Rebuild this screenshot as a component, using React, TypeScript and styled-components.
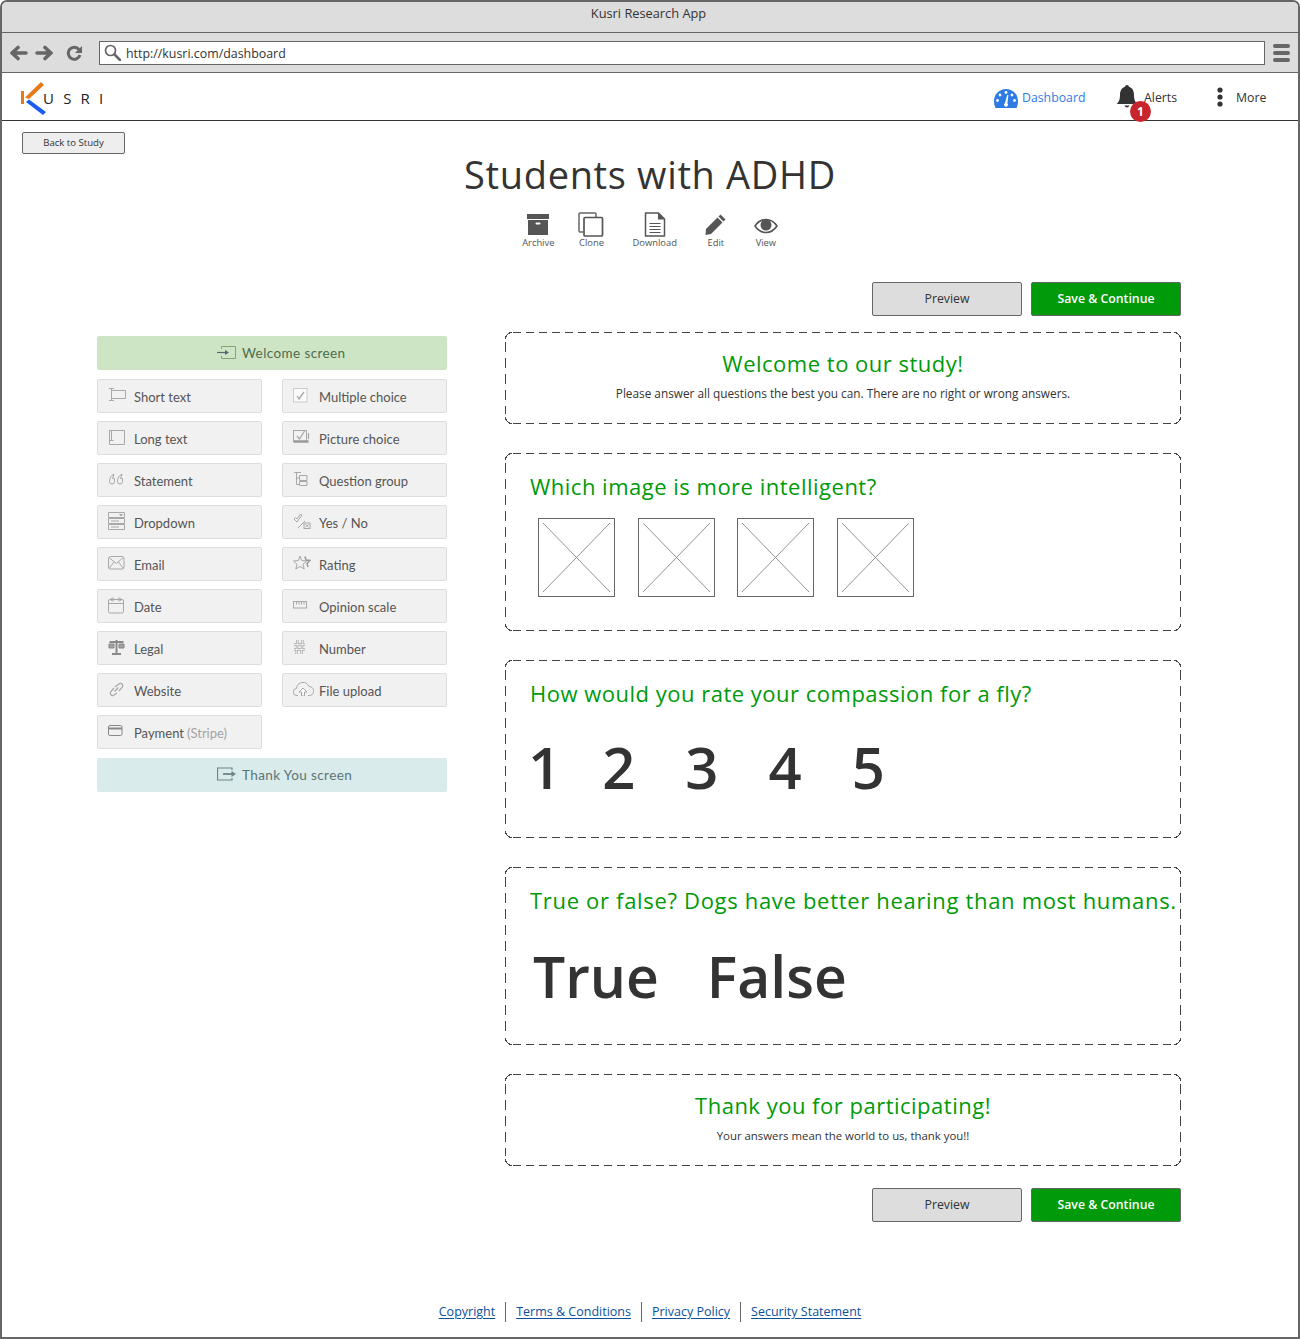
import * as React from "react";
import styled, { createGlobalStyle } from "styled-components";

const Global = createGlobalStyle`
  html, body { margin: 0; padding: 0; background: #fff; }
  * { box-sizing: border-box; }
  body { font-family: "Open Sans", "Liberation Sans", sans-serif; color: #333; }
`;

const Window = styled.div`
  width: 1300px;
  height: 1339px;
  border: 2px solid #666;
  border-radius: 7px 7px 0 0;
  display: flex;
  flex-direction: column;
  overflow: hidden;
`;

const TitleBar = styled.div`
  height: 31px;
  flex: none;
  background: #ddd;
  border-bottom: 1px solid #666;
  text-align: center;
  font-size: 12.8px;
  line-height: 23px;
  padding-right: 3px;
`;

const Toolbar = styled.div`
  height: 40px;
  flex: none;
  background: #ddd;
  border-bottom: 1px solid #666;
  display: flex;
  align-items: center;
  padding: 0 8px 0 8px;
`;

const NavIcons = styled.div`
  display: flex;
  align-items: center;
  gap: 7px;
  width: 89px;
  flex: none;
`;

const AddressBar = styled.div`
  width: 1166px;
  height: 24px;
  flex: none;
  border: 1px solid #666;
  background: #fff;
  display: flex;
  align-items: center;
  gap: 5px;
  padding-left: 4px;
  font-size: 12.4px;
`;

const UrlText = styled.span`
  padding-top: 2px;
`;

const Menu = styled.div`
  margin-left: 8px;
  width: 18px;
  display: flex;
  flex-direction: column;
  gap: 3px;
`;

const MenuBar = styled.span`
  display: block;
  height: 4px;
  border-radius: 2px;
  background: #666;
`;

const Header = styled.header`
  height: 48px;
  flex: none;
  border-bottom: 1px solid #333;
  display: flex;
  align-items: center;
  padding: 0 33px 0 18px;
`;

const Logo = styled.div`
  display: flex;
  align-items: center;
  flex: 1;
  padding-top: 3px;
`;

const LogoText = styled.span`
  font-size: 15px;
  font-weight: 500;
  letter-spacing: 9.2px;
  margin-left: -4px;
  color: #222;
`;

const Nav = styled.nav`
  display: flex;
  align-items: center;
`;

const NavItem = styled.a<{ $active?: boolean; $width: number }>`
  display: flex;
  align-items: center;
  position: relative;
  flex: none;
  width: ${(p) => p.$width}px;
  font-size: 12.3px;
  font-weight: 500;
  color: ${(p) => (p.$active ? "#2f7be5" : "#333")};
  svg { flex: none; }
`;

const NavLabel = styled.span<{ $left: number }>`
  margin-left: ${(p) => p.$left}px;
  padding-top: 1px;
`;

const Badge = styled.span`
  position: absolute;
  left: 14px;
  top: 16px;
  width: 21px;
  height: 21px;
  border-radius: 50%;
  background: #c8242b;
  color: #fff;
  font-size: 12px;
  font-weight: 700;
  line-height: 21px;
  text-align: center;
`;

const Body = styled.main`
  flex: 1;
  display: flex;
  flex-direction: column;
`;

const BackButton = styled.button`
  width: 103px;
  height: 22px;
  margin: 11px 0 0 20px;
  padding: 0 0 2px;
  flex: none;
  background: #eee;
  border: 1px solid #666;
  border-radius: 2px;
  color: #333;
  font: 500 9.6px "Open Sans", sans-serif;
`;

const PageTitle = styled.h1`
  margin: -1px 0 1px;
  height: 42px;
  text-align: center;
  font-size: 38px;
  line-height: 42px;
  font-weight: 500;
  letter-spacing: 0.65px;
  color: #333;
`;

const Tools = styled.div`
  display: flex;
  justify-content: center;
  margin-top: 16px;
  height: 38px;
`;

const Tool = styled.div<{ $gap?: number }>`
  display: flex;
  flex-direction: column;
  align-items: center;
  margin-left: ${(p) => p.$gap ?? 0}px;
  font-size: 9.4px;
  line-height: 11px;
  color: #555;
`;

const ToolIcon = styled.div`
  height: 25px;
  flex: none;
  display: flex;
  align-items: flex-end;
`;

const Actions = styled.div<{ $top: number }>`
  display: flex;
  justify-content: flex-end;
  gap: 9px;
  margin-top: ${(p) => p.$top}px;
  padding-right: 117px;
`;

const ActionButton = styled.button<{ $primary?: boolean }>`
  width: 150px;
  height: 34px;
  padding: 0 0 2px;
  border: 1px solid #666;
  border-radius: 2px;
  background: ${(p) => (p.$primary ? "#009a0a" : "#ddd")};
  color: ${(p) => (p.$primary ? "#fff" : "#333")};
  font: ${(p) => (p.$primary ? 600 : 500)} 12.3px "Open Sans", sans-serif;
`;

const Columns = styled.div`
  display: flex;
  gap: 58px;
  margin-top: 16px;
  padding-left: 95px;
`;

const Palette = styled.aside`
  width: 350px;
  flex: none;
  padding-top: 3px;
  display: grid;
  grid-template-columns: 165px 165px;
  column-gap: 20px;
  row-gap: 8px;
  align-content: start;
`;

const ScreenBlock = styled.div<{ $bg: string; $fg: string }>`
  grid-column: 1 / 3;
  height: 34px;
  margin: 1px 0;
  padding: 0 0 0 120px;
  background: ${(p) => p.$bg};
  color: ${(p) => p.$fg};
  border-radius: 2px;
  display: flex;
  align-items: center;
  gap: 6px;
  font: 13.5px Lato, sans-serif;
  letter-spacing: 0.4px;
`;

const Field = styled.div`
  height: 34px;
  background: #f1f1f1;
  border: 1px solid #ddd;
  border-radius: 2px;
  display: flex;
  align-items: center;
  padding: 0 0 0 10px;
  font: 13px Lato, sans-serif;
  color: #555;
`;

const FieldIcon = styled.span`
  width: 26px;
  flex: none;
  display: flex;
  justify-content: flex-start;
  margin-top: -2px;
`;

const FieldLabel = styled.span`
  padding-top: 2px;
`;

const Muted = styled.span`
  color: #a3a3a3;
  margin-left: 3px;
`;

const Questions = styled.section`
  width: 676px;
  flex: none;
  display: flex;
  flex-direction: column;
  gap: 29px;
`;

const Card = styled.div<{ $height: number; $center?: boolean }>`
  --c: #444;
  height: ${(p) => p.$height}px;
  text-align: ${(p) => (p.$center ? "center" : "left")};
  background:
    radial-gradient(circle at 100% 100%, transparent 6px, var(--c) 6px, var(--c) 7px, transparent 7px) 0 0 / 7px 7px no-repeat,
    radial-gradient(circle at 0 100%, transparent 6px, var(--c) 6px, var(--c) 7px, transparent 7px) 100% 0 / 7px 7px no-repeat,
    radial-gradient(circle at 100% 0, transparent 6px, var(--c) 6px, var(--c) 7px, transparent 7px) 0 100% / 7px 7px no-repeat,
    radial-gradient(circle at 0 0, transparent 6px, var(--c) 6px, var(--c) 7px, transparent 7px) 100% 100% / 7px 7px no-repeat,
    repeating-linear-gradient(to right, var(--c) 0 8px, transparent 8px 13px) 8px 0 / calc(100% - 16px) 1px no-repeat,
    repeating-linear-gradient(to right, var(--c) 0 8px, transparent 8px 13px) 8px 100% / calc(100% - 16px) 1px no-repeat,
    repeating-linear-gradient(to bottom, var(--c) 0 10px, transparent 10px 16px) 0 10px / 1px calc(100% - 20px) no-repeat,
    repeating-linear-gradient(to bottom, var(--c) 0 10px, transparent 10px 16px) 100% 10px / 1px calc(100% - 20px) no-repeat;
  padding: 18px 0 0 25px;
`;

const CenterCard = styled(Card)`
  padding: 16px 0 0 0;
`;

const Question = styled.h2<{ $spacing?: number }>`
  margin: 0;
  font-size: 22px;
  line-height: 30px;
  font-weight: 500;
  color: #009a0a;
  white-space: nowrap;
  letter-spacing: ${(p) => p.$spacing ?? 0.5}px;
`;

const Note = styled.p<{ $size: number }>`
  margin: 8px 0 0;
  font-size: ${(p) => p.$size}px;
  font-weight: 500;
  line-height: 15px;
  color: #333;
`;

const Images = styled.div`
  display: flex;
  gap: 22.6px;
  margin: 17px 0 0 8px;
`;

const ImageBox = styled.div`
  width: 77px;
  height: 79px;
  border: 1px solid #666;
  padding: 4px;
  display: flex;
`;

const Digits = styled.div`
  display: flex;
  margin: 24px 0 0 -2px;
  font-size: 58px;
  font-weight: 600;
  line-height: 70px;
  color: #333;
`;

const Digit = styled.span<{ $left: number }>`
  margin-left: ${(p) => p.$left}px;
`;

const Answers = styled.div`
  display: flex;
  gap: 48px;
  margin: 25px 0 0 3px;
  font-size: 57px;
  font-weight: 600;
  line-height: 72px;
  color: #333;
`;

const Footer = styled.footer`
  margin-top: auto;
  height: 35px;
  display: flex;
  justify-content: center;
  align-items: flex-start;
  font-size: 12.5px;
  font-weight: 500;
  line-height: 20px;
`;

const FooterLink = styled.a<{ $first?: boolean }>`
  display: block;
  height: 20px;
  padding: 0 10px;
  border-left: ${(p) => (p.$first ? "none" : "1px solid #666")};
`;

const LinkText = styled.span`
  color: #0b4f9e;
  text-decoration: underline;
  text-underline-offset: 2px;
`;

const ArrowIcon = ({ flip }: { flip?: boolean }) => (
  <svg width="18" height="16" viewBox="0 0 18 16" style={flip ? { transform: "scaleX(-1)" } : undefined}>
    <path d="M2 8 8 2.500M2 8l6 5.500M2.500 8H16" fill="none" stroke="#666" strokeWidth="3.600" strokeLinecap="round" strokeLinejoin="round" />
  </svg>
);

const ReloadIcon = () => (
  <svg width="17" height="16" viewBox="0 0 17 16" style={{ marginLeft: 6 }}>
    <path d="M13 4.500A6 6 0 1 0 14 10" fill="none" stroke="#666" strokeWidth="3" />
    <path d="M16 1v7H9z" fill="#666" />
  </svg>
);

const SearchIcon = () => (
  <svg width="17" height="17" viewBox="0 0 17 17">
    <circle cx="6.500" cy="6.500" r="5" fill="none" stroke="#666" strokeWidth="1.700" />
    <path d="M10.500 10.500 16 16" stroke="#666" strokeWidth="2.600" strokeLinecap="round" />
  </svg>
);

const KusriMark = () => (
  <svg width="27" height="34" viewBox="0 0 27 34">
    <path d="M1 10h3v13H1z" fill="#e8791a" />
    <path d="M5 16.500 21 1l3 3L9 18z" fill="#e8791a" />
    <path d="M9 18.500 26 31l-3 3L6 21z" fill="#1a5cf0" />
  </svg>
);

const GaugeIcon = () => (
  <svg width="24" height="19" viewBox="0 0 24 19" style={{ marginTop: 3 }}>
    <path d="M12 0a12 12 0 0 1 12 12c0 3-.7 5-1.500 7h-21C.7 17 0 15 0 12A12 12 0 0 1 12 0z" fill="#2f7be5" />
    <g fill="#fff">
      <circle cx="12" cy="3.500" r="1.400" />
      <circle cx="6" cy="6" r="1.400" />
      <circle cx="3.500" cy="11.500" r="1.400" />
      <circle cx="20.500" cy="11.500" r="1.400" />
      <circle cx="18" cy="6" r="1.400" />
      <path d="M13.200 6h1.200l-1 8.200a2 2 0 1 1-2.400-.3z" />
    </g>
  </svg>
);

const BellIcon = () => (
  <svg width="22" height="24" viewBox="0 0 22 24">
    <path d="M11 0c1.200 0 1.800.8 1.900 1.800C16.500 3 18 6 18 10c0 5 1.500 7.500 3.500 9H.5C2.500 17.500 4 15 4 10c0-4 1.500-7 5.100-8.200C9.200.8 9.800 0 11 0z" fill="#333" />
    <path d="M8.500 20.500a2.600 2.600 0 0 0 5 0z" fill="#333" />
  </svg>
);

const DotsIcon = () => (
  <svg width="6" height="20" viewBox="0 0 6 20">
    <g fill="#333">
      <circle cx="3" cy="3" r="2.600" />
      <circle cx="3" cy="10" r="2.600" />
      <circle cx="3" cy="17" r="2.600" />
    </g>
  </svg>
);

const ArchiveIcon = () => (
  <svg width="24" height="22" viewBox="0 0 24 22" style={{ marginBottom: 2 }}>
    <path d="M1 1h22v5H1z" fill="#555" />
    <path d="M2 7h20v15H2z" fill="#555" />
    <rect x="9.500" y="9.500" width="5" height="2" rx="1" fill="#fff" />
  </svg>
);

const CloneIcon = () => (
  <svg width="26" height="25" viewBox="0 0 26 25">
    <path d="M5 20H2a1 1 0 0 1-1-1V2a1 1 0 0 1 1-1h15a1 1 0 0 1 1 1v3" fill="none" stroke="#666" strokeWidth="1.500" />
    <rect x="6" y="5.500" width="18.500" height="18.500" rx="1" fill="#fff" stroke="#555" strokeWidth="1.700" />
  </svg>
);

const DocIcon = () => (
  <svg width="22" height="25" viewBox="0 0 22 25">
    <path d="M1.500 1h13l6 6v17h-19z" fill="#fff" stroke="#555" strokeWidth="1.500" strokeLinejoin="round" />
    <path d="M14 1v6.500h6.500z" fill="#555" />
    <path d="M5.500 11.500h11M5.500 14.500h11M5.500 17.500h11M5.500 20.500h11" stroke="#555" strokeWidth="1.200" />
  </svg>
);

const PencilIcon = () => (
  <svg width="22" height="22" viewBox="0 0 22 22" style={{ marginBottom: 2 }}>
    <path d="M15.500 1.500 20.500 6.500 18.500 8.500 13.500 3.500z" fill="#555" />
    <path d="M12.500 4.500 17.500 9.500 6 21l-5.500 1L1 16z" fill="#555" />
  </svg>
);

const EyeIcon = () => (
  <svg width="24" height="16" viewBox="0 0 24 16" style={{ marginBottom: 3 }}>
    <path d="M1 8c3-4.500 6.500-6.500 11-6.500S20 3.500 23 8c-3 4.500-6.500 6.500-11 6.500S4 12.500 1 8z" fill="#fff" stroke="#555" strokeWidth="1.600" />
    <circle cx="12" cy="7" r="5.500" fill="#555" />
  </svg>
);

const ln = { fill: "none", stroke: "#a8a8a8", strokeWidth: 1 } as const;

const FieldSvg = ({ children, w = 18, h = 16 }: { children: React.ReactNode; w?: number; h?: number }) => (
  <svg width={w} height={h} viewBox={`0 0 ${w} ${h}`}>
    <g {...ln}>{children}</g>
  </svg>
);

const fieldIcons: Record<string, React.ReactNode> = {
  short: <FieldSvg><path d="M3.500 3.500H17.500V11.500H3.500M1 1.500h5M3.500 1.500v12M1 13.500h5" /></FieldSvg>,
  long: <FieldSvg><path d="M3.500 1.500H16.500V15.500H1.500V1.500M1 1.500h4M3.500 1.500v10M1.500 11.500h4" /></FieldSvg>,
  statement: <FieldSvg h={13}><path d="M6 1C3 2.500 1.500 5 1.500 8.500a2.500 2.500 0 0 0 5 0V5.500H4.500M6 1c-.5 1.500-1 3-1.500 4.500M14 1c-3 1.500-4.500 4-4.500 7.500a2.500 2.500 0 0 0 5 0V5.500h-2M14 1c-.5 1.500-1 3-1.500 4.500" /></FieldSvg>,
  dropdown: <FieldSvg h={18}><path d="M.5.500h16v5H.500zM.5 6.500h16v5H.500zM.5 12.500h16v5H.500zM3 9h8M3 15h8" /><path d="M11.500 2.500h3L13 4z" fill="#888" /></FieldSvg>,
  email: <FieldSvg h={14}><rect x=".5" y=".5" width="15.500" height="12.500" rx="2" /><path d="M1 1.500 8.250 7.500 15.500 1.500M1 12.500 6 6M15.500 12.500 10.500 6" /></FieldSvg>,
  date: <FieldSvg h={17}><rect x=".5" y="2.500" width="15" height="13.500" rx="1.500" /><path d="M.5 6.500h15" /><circle cx="4.500" cy="2.500" r="1.500" /><circle cx="11.500" cy="2.500" r="1.500" /></FieldSvg>,
  legal: <FieldSvg h={16}><path d="M8.500 1v13M4 15h9M1.500 3h14" stroke="#888" strokeWidth="2" /><path d="M1 9V5h5v4zM11 9V5h5v4z" fill="#a0a0a0" stroke="#888" /></FieldSvg>,
  website: <FieldSvg h={15}><path d="M7 5 11.500 1.500a2.500 2.500 0 0 1 3 3.500L11 9M9 11l-3.500 2.500a2.500 2.500 0 0 1-3-3.500L6 6M6.500 9.500l4-4" strokeWidth="1.200" /></FieldSvg>,
  payment: <FieldSvg h={12}><rect x=".5" y=".5" width="13.500" height="10" rx="1.500" stroke="#888" /><path d="M.5 3.500h13.500" stroke="#888" strokeWidth="2" /></FieldSvg>,
  multi: <FieldSvg h={15}><rect x=".5" y=".5" width="13.500" height="13.500" fill="#fafafa" stroke="#ccc" /><path d="M4 8l2 3 5-7" strokeWidth="1.300" /></FieldSvg>,
  picture: <FieldSvg h={14}><rect x=".5" y=".5" width="13" height="11" /><path d="M.5 11.500h15" stroke="#999" strokeWidth="2.500" /><path d="M4 6l2.500 3 5-8M15.500 3v6" strokeWidth="1.300" /></FieldSvg>,
  group: <FieldSvg h={16}><path d="M1 1.500h7M3.500 1.500v12h3M3.500 7h3M6.500 4.500h7.500v5h-7.500zM6.500 10.500h7.500v4h-7.500z" /></FieldSvg>,
  yesno: <FieldSvg h={15}><path d="M1 5l3 3 5-7-1.500-1L4 5 2.500 3.500zM5 14 12 7" /><rect x="11" y="9" width="6" height="5.500" /><path d="M12.500 10.500l3 2.500M15.500 10.500l-3 2.500" /></FieldSvg>,
  rating: <FieldSvg h={16}><path d="M7 1l1.800 4.600 5 .4-3.800 3.200 1.200 4.800L7 11.500 2.800 14 4 9.200.5 6l5-.4z" /><path d="M12 1.500 13 5l4 .5-3 3 1 3.500" stroke="#999" strokeWidth="1.500" /></FieldSvg>,
  scale: <FieldSvg h={8} w={15}><rect x=".5" y=".5" width="13" height="6.500" /><path d="M3.500 1v2.500M6 1v2.500M8.500 1v2.500M11 1v2.500" /></FieldSvg>,
  number: <svg width="13" height="16" viewBox="0 0 13 16"><path d="M4.500 1 3.500 15M9.500 1 8.500 15M1 5.500h11M1 10.500h11" fill="none" stroke="#a8a8a8" strokeWidth="2.400" /><path d="M4.500 1 3.500 15M9.500 1 8.500 15M1 5.500h11M1 10.500h11" fill="none" stroke="#f1f1f1" strokeWidth=".9" /></svg>,
  upload: <svg width="21" height="14" viewBox="0 0 21 14"><path d="M5 13.500H4a3.500 3.500 0 0 1-.5-7A6.500 6.500 0 0 1 16 4.500a4.500 4.500 0 0 1 .5 9H15" fill="none" stroke="#a8a8a8" /><path d="M10 6l-4 4h2.500v4h3v-4H14z" fill="#fff" stroke="#a8a8a8" /></svg>,
};

const EnterIcon = () => (
  <svg width="19" height="14" viewBox="0 0 19 14">
    <path d="M4.500 3V.5h14v12h-14V10" fill="none" stroke="#8aa080" />
    <path d="M0 6.500h9" stroke="#567" strokeWidth="1.200" />
    <path d="M8 4l4 2.500L8 9z" fill="#567" />
  </svg>
);

const ExitIcon = () => (
  <svg width="19" height="17" viewBox="0 0 19 17">
    <path d="M15 3V1H.5v12H15v-2" fill="none" stroke="#6b8688" strokeWidth="1.200" />
    <path d="M6 7h9" stroke="#6b8688" strokeWidth="1.800" />
    <path d="M14.500 4 19 7l-4.500 3z" fill="#6b8688" />
  </svg>
);

const CrossLines = () => (
  <svg width="100%" height="100%" viewBox="0 0 67 69">
    <path d="M0 0 67 69M67 0 0 69" stroke="#777" strokeWidth=".8" />
  </svg>
);

const fields: [string, string, string?][] = [
  ["short", "Short text"], ["multi", "Multiple choice"],
  ["long", "Long text"], ["picture", "Picture choice"],
  ["statement", "Statement"], ["group", "Question group"],
  ["dropdown", "Dropdown"], ["yesno", "Yes / No"],
  ["email", "Email"], ["rating", "Rating"],
  ["date", "Date"], ["scale", "Opinion scale"],
  ["legal", "Legal"], ["number", "Number"],
  ["website", "Website"], ["upload", "File upload"],
  ["payment", "Payment", "(Stripe)"],
];

const FormActions = ({ top }: { top: number }) => (
  <Actions $top={top}>
    <ActionButton>Preview</ActionButton>
    <ActionButton $primary>Save &amp; Continue</ActionButton>
  </Actions>
);

export default function App(): JSX.Element {
  return (
    <Window>
      <Global />
      <TitleBar>Kusri Research App</TitleBar>
      <Toolbar>
        <NavIcons>
          <ArrowIcon />
          <ArrowIcon flip />
          <ReloadIcon />
        </NavIcons>
        <AddressBar>
          <SearchIcon />
          <UrlText>http://kusri.com/dashboard</UrlText>
        </AddressBar>
        <Menu>
          <MenuBar />
          <MenuBar />
          <MenuBar />
        </Menu>
      </Toolbar>
      <Header>
        <Logo>
          <KusriMark />
          <LogoText>USRI</LogoText>
        </Logo>
        <Nav>
          <NavItem $active $width={122}>
            <GaugeIcon />
            <NavLabel $left={4}>Dashboard</NavLabel>
          </NavItem>
          <NavItem $width={101}>
            <BellIcon />
            <Badge>1</Badge>
            <NavLabel $left={6}>Alerts</NavLabel>
          </NavItem>
          <NavItem $width={48}>
            <DotsIcon />
            <NavLabel $left={13}>More</NavLabel>
          </NavItem>
        </Nav>
      </Header>
      <Body>
        <BackButton>Back to Study</BackButton>
        <PageTitle>Students with ADHD</PageTitle>
        <Tools>
          <Tool><ToolIcon><ArchiveIcon /></ToolIcon>Archive</Tool>
          <Tool $gap={24}><ToolIcon><CloneIcon /></ToolIcon>Clone</Tool>
          <Tool $gap={28}><ToolIcon><DocIcon /></ToolIcon>Download</Tool>
          <Tool $gap={28}><ToolIcon><PencilIcon /></ToolIcon>Edit</Tool>
          <Tool $gap={27}><ToolIcon><EyeIcon /></ToolIcon>View</Tool>
        </Tools>
        <FormActions top={32} />
        <Columns>
          <Palette>
            <ScreenBlock $bg="#cde5c5" $fg="#4f6b4f"><EnterIcon />Welcome screen</ScreenBlock>
            {fields.map(([icon, label, extra]) => (
              <Field key={label}>
                <FieldIcon>{fieldIcons[icon]}</FieldIcon>
                <FieldLabel>
                  {label}
                  {extra && <Muted>{extra}</Muted>}
                </FieldLabel>
              </Field>
            ))}
            <ScreenBlock $bg="#d9ebeb" $fg="#5b7375"><ExitIcon />Thank You screen</ScreenBlock>
          </Palette>
          <Questions>
            <CenterCard $height={92} $center>
              <Question>Welcome to our study!</Question>
              <Note $size={11.8}>Please answer all questions the best you can. There are no right or wrong answers.</Note>
            </CenterCard>
            <Card $height={178}>
              <Question>Which image is more intelligent?</Question>
              <Images>
                <ImageBox><CrossLines /></ImageBox>
                <ImageBox><CrossLines /></ImageBox>
                <ImageBox><CrossLines /></ImageBox>
                <ImageBox><CrossLines /></ImageBox>
              </Images>
            </Card>
            <Card $height={178}>
              <Question>How would you rate your compassion for a fly?</Question>
              <Digits>
                <Digit $left={0}>1</Digit>
                <Digit $left={41}>2</Digit>
                <Digit $left={50}>3</Digit>
                <Digit $left={50}>4</Digit>
                <Digit $left={50}>5</Digit>
              </Digits>
            </Card>
            <Card $height={178}>
              <Question $spacing={0.68}>True or false? Dogs have better hearing than most humans.</Question>
              <Answers>
                <span>True</span>
                <span>False</span>
              </Answers>
            </Card>
            <CenterCard $height={92} $center>
              <Question>Thank you for participating!</Question>
              <Note $size={11.4}>Your answers mean the world to us, thank you!!</Note>
            </CenterCard>
          </Questions>
        </Columns>
        <FormActions top={22} />
        <Footer>
          <FooterLink $first><LinkText>Copyright</LinkText></FooterLink>
          <FooterLink><LinkText>Terms &amp; Conditions</LinkText></FooterLink>
          <FooterLink><LinkText>Privacy Policy</LinkText></FooterLink>
          <FooterLink><LinkText>Security Statement</LinkText></FooterLink>
        </Footer>
      </Body>
    </Window>
  );
}
